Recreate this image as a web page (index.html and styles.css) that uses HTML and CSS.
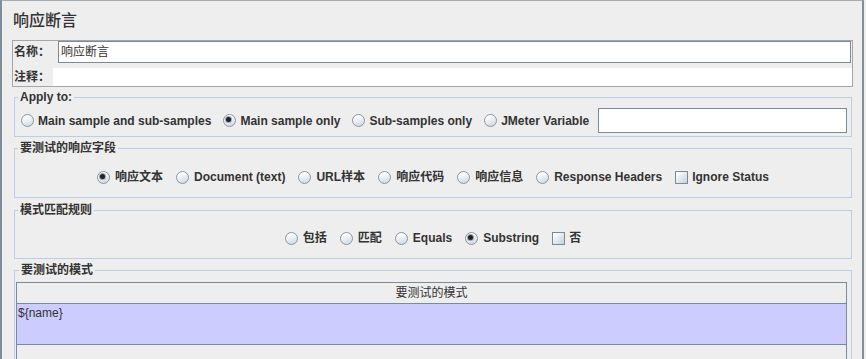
FILE: index.html
```html
<!DOCTYPE html>
<html lang="zh-CN">
<head>
    <meta charset="UTF-8">
    <title>响应断言</title>
    <link rel="stylesheet" href="styles.css">
</head>
<body>
    <div class="frame">
        <div class="title">响应断言</div>

        <div class="names">
            <div class="name-row">
                <span class="lbl">名称：</span>
                <div class="input">响应断言</div>
            </div>
            <div class="name-row comment">
                <span class="lbl">注释：</span>
                <div class="field"></div>
            </div>
        </div>

        <fieldset class="group apply">
            <legend>Apply to:</legend>
            <div class="opts">
                <span class="opt"><i class="radio"></i>Main sample and sub-samples</span>
                <span class="opt"><i class="radio on"></i>Main sample only</span>
                <span class="opt"><i class="radio"></i>Sub-samples only</span>
                <span class="opt"><i class="radio"></i>JMeter Variable</span>
                <div class="var-input"></div>
            </div>
        </fieldset>

        <fieldset class="group fields">
            <legend>要测试的响应字段</legend>
            <div class="opts center">
                <span class="opt"><i class="radio on"></i>响应文本</span>
                <span class="opt"><i class="radio"></i>Document (text)</span>
                <span class="opt"><i class="radio"></i>URL样本</span>
                <span class="opt"><i class="radio"></i>响应代码</span>
                <span class="opt"><i class="radio"></i>响应信息</span>
                <span class="opt"><i class="radio"></i>Response Headers</span>
                <span class="opt"><i class="check"></i>Ignore Status</span>
            </div>
        </fieldset>

        <fieldset class="group rules">
            <legend>模式匹配规则</legend>
            <div class="opts center">
                <span class="opt"><i class="radio"></i>包括</span>
                <span class="opt"><i class="radio"></i>匹配</span>
                <span class="opt"><i class="radio"></i>Equals</span>
                <span class="opt"><i class="radio on"></i>Substring</span>
                <span class="opt"><i class="check"></i>否</span>
            </div>
        </fieldset>

        <fieldset class="group patterns">
            <legend>要测试的模式</legend>
            <div class="table">
                <div class="thead">要测试的模式</div>
                <div class="trow selected">${name}</div>
                <div class="tempty"></div>
            </div>
        </fieldset>
    </div>
</body>
</html>
```
FILE: styles.css
```css
html, body {
    margin: 0;
    height: 100%;
    overflow: hidden;
    background-color: #eeeeee;
}

body {
    font-family: "Liberation Sans", "Noto Sans CJK SC", sans-serif;
    font-size: 12px;
    color: #333333;
}

.frame {
    width: 860px;
    height: 400px;
    border-top: 1px solid #a3abb3;
    border-left: 2px solid #7f8d9c;
    border-right: 2px solid #858d95;
}

.title {
    height: 20px;
    padding: 10px 0 9px 11px;
    font-size: 16px;
    font-weight: 500;
    line-height: 20px;
}

/* name / comment box */
.names {
    width: 839px;
    margin-left: 10px;
    border: 1px solid #a6a6a6;
}

.name-row {
    display: flex;
    height: 22px;
}

.lbl {
    font-weight: bold;
    padding-left: 1px;
    line-height: 22px;
}

.name-row .lbl {
    width: 44px;
}

.input {
    box-sizing: border-box;
    width: 793px;
    height: 22px;
    padding-left: 2px;
    line-height: 20px;
    border: 1px solid #7a8a99;
    background: #fff;
}

.comment {
    height: 18px;
    padding-top: 5px;
}

.comment .lbl {
    width: 39px;
    line-height: 18px;
}

.field {
    flex: 1;
    background: #fff;
}

/* titled groups */
.group {
    margin: 0 0 0 12px;
    padding: 0;
    width: 838px;
    box-sizing: border-box;
    min-width: 0;
    border: 1px solid #b8cfe5;
}

.group legend {
    margin-left: 3px;
    padding: 0 2px;
    font-weight: bold;
    line-height: 15px;
}

.apply {
    margin-top: 3px;
    padding: 3px 0 3px;
}

.apply .opts {
    padding-left: 6px;
    gap: 12px;
}

.fields {
    margin-top: 4px;
    padding: 13px 0 12px;
}

.rules {
    margin-top: 5px;
    padding: 12px 0 12px;
}

.patterns {
    margin-top: 4px;
    height: 120px;
    padding: 4px 4px 0 1px;
}

.opts {
    display: flex;
    align-items: center;
    height: 25px;
    gap: 12px;
}

.opts.center {
    justify-content: center;
    height: 16px;
    gap: 13px;
}

.opts.center .radio {
    margin-right: 5px;
}

.opt {
    display: flex;
    align-items: center;
    font-weight: bold;
    line-height: 16px;
    white-space: nowrap;
}

.radio {
    position: relative;
    width: 13px;
    height: 13px;
    margin-right: 4px;
    box-sizing: border-box;
    border: 1px solid #8796a6;
    border-radius: 50%;
    background: linear-gradient(160deg, #ffffff 20%, #c9d4df);
}

.radio.on::after {
    content: "";
    position: absolute;
    left: 2px;
    top: 2px;
    width: 5px;
    height: 5px;
    border-radius: 50%;
    background: #222;
    box-shadow: 0 0 0 1px #9aa7b4;
}

.check {
    width: 13px;
    height: 13px;
    margin-right: 4px;
    box-sizing: border-box;
    border: 1px solid #7a8a99;
    background: linear-gradient(135deg, #ffffff 10%, #c3cfdb);
}

.var-input {
    width: 249px;
    height: 25px;
    margin-left: -3px;
    box-sizing: border-box;
    border: 1px solid #7a8a99;
    background: #fff;
}

/* pattern table */
.table {
    height: 100%;
    border: 1px solid #7a8a99;
    border-bottom: none;
}

.thead {
    height: 20px;
    line-height: 20px;
    text-align: center;
    border-bottom: 1px solid #7a8a99;
}

.trow {
    height: 40px;
    padding-left: 1px;
    line-height: 18px;
    border-bottom: 1px solid #7a8a99;
}

.selected {
    background: #ccccff;
}

.tempty {
    height: 40px;
}
```
